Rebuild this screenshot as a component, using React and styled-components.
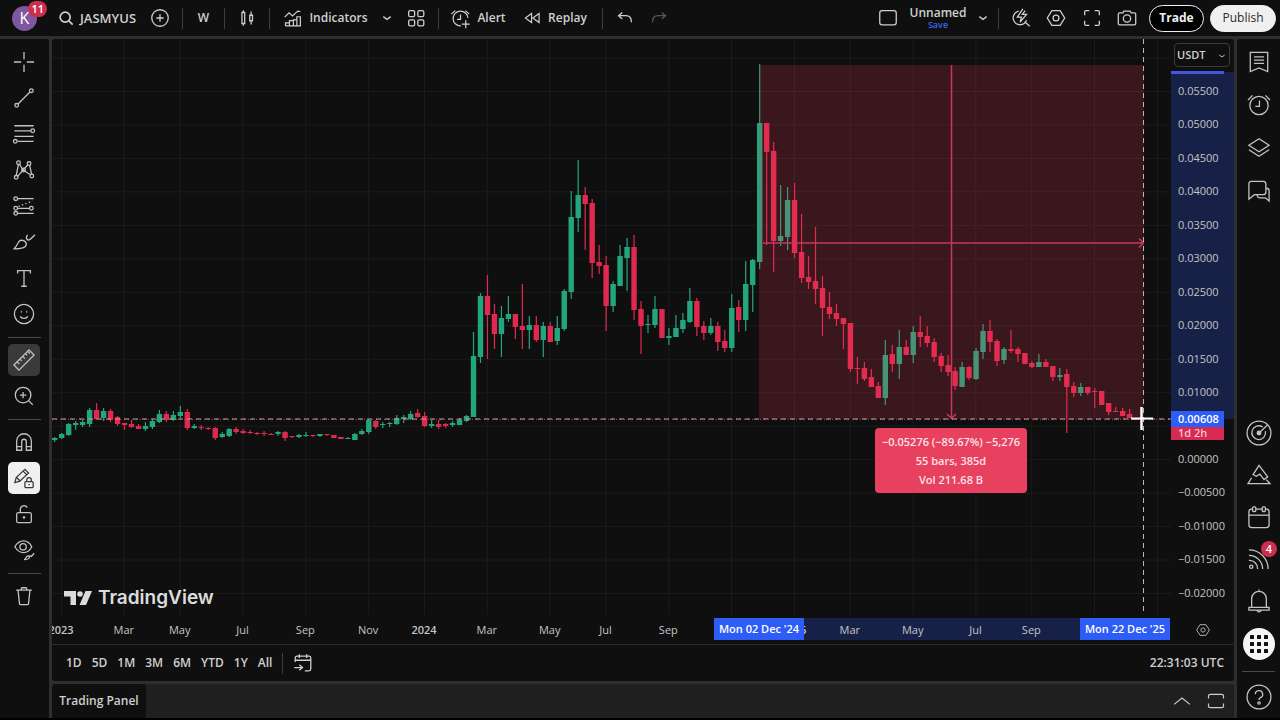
import React from 'react'
import styled, { createGlobalStyle } from 'styled-components'

const GlobalStyle = createGlobalStyle`
    * { box-sizing: border-box; }
    body {
        margin: 0;
        background: #000;
        color: #cfcfcf;
        font-family: 'Trebuchet MS', 'Open Sans', 'Noto Sans', sans-serif;
        font-size: 12px;
        line-height: 16px;
        overflow: hidden;
    }
    button, select {
        font: inherit;
        color: inherit;
        background: none;
        border: 0;
        padding: 0;
        margin: 0;
        cursor: pointer;
    }
`

const Shell = styled.div`
    height: 100vh;
    padding-bottom: 2px;
    display: flex;
    flex-direction: column;
`

const Frame = styled.div`
    flex: 1;
    min-height: 0;
    display: grid;
    grid-template-columns: 49px minmax(0, 1fr) 43px;
    grid-template-rows: 36px minmax(0, 1fr);
    gap: 3px;
    background: #2e2e2e;
`

const Header = styled.header`
    grid-column: 1 / -1;
    display: flex;
    align-items: center;
    background: #0f0f0f;
`

const Spacer = styled.div`
    flex: 1;
`

const AvatarButton = styled.button`
    position: relative;
    width: 49px;
    height: 36px;
    display: grid;
    place-items: center;
`

const Avatar = styled.span`
    width: 25px;
    height: 25px;
    border-radius: 50%;
    background: #7e57a0;
    color: #fff;
    display: grid;
    place-items: center;
    font-size: 16px;
`

const Badge = styled.span`
    position: absolute;
    top: ${({ $top }) => $top}px;
    right: ${({ $right }) => $right}px;
    min-width: 16px;
    height: 16px;
    padding: 0 3px;
    border-radius: 8px;
    background: #cc2f4e;
    color: #fff;
    font-size: 11px;
    font-weight: 600;
    text-align: center;
`

const ToolButton = styled.button`
    width: ${({ $width = 34 }) => $width}px;
    height: 32px;
    display: flex;
    align-items: center;
    justify-content: center;
    gap: ${({ $large }) => ($large ? 4 : 6)}px;
    font-size: ${({ $large }) => ($large ? 13 : 12)}px;
    font-weight: 600;
    white-space: nowrap;
    color: ${({ $dim }) => ($dim ? '#585858' : '#cfcfcf')};
`

const Divider = styled.span`
    width: 11px;
    height: 21px;
    display: flex;
    justify-content: center;
    &::before {
        content: '';
        width: 1px;
        background: #3d3d3d;
    }
`

const LayoutName = styled.button`
    width: 70px;
    display: flex;
    flex-direction: column;
    align-items: center;
    font-weight: 600;
    line-height: 14px;
`

const SaveHint = styled.span`
    font-size: 9px;
    font-weight: 600;
    line-height: 10px;
    color: #3d63f0;
`

const Pill = styled.button`
    width: ${({ $width }) => $width}px;
    height: 27px;
    border-radius: 14px;
    margin-left: ${({ $solid }) => ($solid ? 6 : 4)}px;
    border: 1px solid #f0f0f0;
    background: ${({ $solid }) => ($solid ? '#f0f0f0' : '#000')};
    color: ${({ $solid }) => ($solid ? '#2a2a2a' : '#f0f0f0')};
    font-weight: ${({ $solid }) => ($solid ? 500 : 700)};
    &:last-child { margin-right: 4px; }
`

const LeftBar = styled.nav`
    background: #0f0f0f;
    border-top-right-radius: 3px;
    padding: 5px 1px 0 0;
    display: flex;
    flex-direction: column;
    align-items: center;
`

const DrawButton = styled.button`
    width: 32px;
    height: 32px;
    margin: 2px 0;
    flex: none;
    border-radius: 5px;
    display: grid;
    place-items: center;
    background: ${({ $state }) => ({ active: '#3a3a3a', locked: '#f0f0f0' }[$state] || 'none')};
    color: ${({ $state }) => ($state === 'locked' ? '#3a3a3a' : '#c4c4c4')};
`

const Rule = styled.span`
    width: 33px;
    height: ${({ $height }) => $height}px;
    flex: none;
    display: flex;
    align-items: center;
    &::before {
        content: '';
        width: 100%;
        height: 1px;
        background: #484848;
    }
`

const RightBar = styled.nav`
    background: #0f0f0f;
    border-top-left-radius: 3px;
    padding: 1px 0 0;
    display: flex;
    flex-direction: column;
    align-items: center;
`

const SideButton = styled.button`
    position: relative;
    width: 43px;
    height: ${({ $height = 42 }) => $height}px;
    flex: none;
    display: grid;
    place-items: center;
    color: #c4c4c4;
`

const AppsDot = styled.span`
    width: 32px;
    height: 32px;
    border-radius: 50%;
    background: #f5f5f5;
    color: #111;
    display: grid;
    place-items: center;
`

const Center = styled.main`
    display: flex;
    flex-direction: column;
    gap: 3px;
    min-width: 0;
`

const Chart = styled.section`
    flex: 1;
    min-height: 0;
    display: flex;
    flex-direction: column;
    border-radius: 3px;
    background: #0f0f0f;
    overflow: hidden;
`

const ChartGrid = styled.div`
    flex: 1;
    min-height: 0;
    display: grid;
    grid-template-columns: minmax(0, 1fr) 63px;
    grid-template-rows: minmax(0, 1fr) 29px;
`

const Plot = styled.div`
    position: relative;
    min-height: 0;
    overflow: hidden;
`

const PlotSvg = styled.svg`
    display: block;
    width: 100%;
    height: 100%;
`

const Brand = styled.a`
    position: absolute;
    left: 12px;
    bottom: 5px;
    display: flex;
    align-items: center;
    gap: 5px;
    color: #dcdcdc;
    font-family: Inter, sans-serif;
    font-size: 19px;
    font-weight: 600;
    line-height: 24px;
    text-decoration: none;
`

const MeasureLabel = styled.div`
    position: absolute;
    left: 823px;
    top: 389px;
    width: 152px;
    padding: 4px 0;
    border-radius: 4px;
    background: #e8405f;
    color: #fbe3e8;
    font-size: 11px;
    font-weight: 600;
    line-height: 19px;
    text-align: center;
    white-space: nowrap;
`

const PriceAxis = styled.div`
    position: relative;
    padding: 4px 4px 0 3px;
    display: flex;
    flex-direction: column;
    font-size: 11px;
    font-weight: 500;
    line-height: 14px;
    background:
        linear-gradient(#4058e0, #4058e0) no-repeat 0 32px / 53px 3px,
        linear-gradient(#172148, #172148) no-repeat 0 33px / 100% 347px;
`

const Currency = styled.label`
    position: relative;
    height: 24px;
    flex: none;
    select {
        appearance: none;
        width: 100%;
        height: 24px;
        padding: 0 2px;
        border: 1px solid #3d3d3d;
        border-radius: 4px;
        background: #0f0f0f;
        font-weight: 600;
    }
    svg {
        position: absolute;
        right: 0;
        top: 5px;
        pointer-events: none;
    }
`

const PriceList = styled.div`
    flex: 1;
    padding: 17px 0 15px 4px;
    display: flex;
    flex-direction: column;
    justify-content: space-between;
    color: #c4c4c4;
    span { height: 14px; }
`

const PriceTag = styled.div`
    position: absolute;
    left: 0;
    top: 372px;
    width: 53px;
    background: #2d5cf6;
    color: #fff;
    padding-left: 7px;
    font-weight: 600;
    line-height: 16px;
`

const Countdown = styled.div`
    margin-left: -7px;
    padding-left: 7px;
    height: 13px;
    line-height: 12px;
    background: #d62a50;
    color: #f5c6d0;
`

const TimeAxis = styled.div`
    position: relative;
    padding-left: 9px;
    display: flex;
    overflow: hidden;
    color: #c4c4c4;
    font-size: 11px;
    line-height: 30px;
`

const Tick = styled.span`
    flex: ${({ $weeks }) => $weeks} 1 0;
    font-weight: ${({ $year }) => ($year ? 600 : 500)};
    span {
        position: relative;
        display: flex;
        justify-content: center;
        width: 0;
    }
`

const RangeBand = styled.div`
    position: absolute;
    left: 707px;
    right: 27px;
    top: 3px;
    height: 22px;
    background: #172148;
`

const DateTag = styled.div`
    position: absolute;
    left: ${({ $left }) => $left}px;
    top: 3px;
    width: 90px;
    background: #2d5cf6;
    color: #fff;
    font-weight: 600;
    line-height: 22px;
    text-align: center;
    white-space: nowrap;
`

const AxisCorner = styled.button`
    display: grid;
    place-items: center;
    color: #b8b8b8;
`

const RangeBar = styled.div`
    height: 37px;
    flex: none;
    border-top: 1px solid #2a2a2a;
    padding: 0 10px 0 9px;
    display: flex;
    align-items: center;
    font-weight: 600;
`

const RangeButton = styled.button`
    padding: 0 5px;
    line-height: 24px;
`

const Panel = styled.footer`
    height: 34px;
    flex: none;
    display: flex;
    align-items: center;
    background: #1f1f1f;
    border-radius: 3px 3px 0 0;
    overflow: hidden;
    padding-right: 1px;
`

const PanelTab = styled.button`
    width: 94px;
    height: 34px;
    background: #0f0f0f;
    border-radius: 3px 3px 0 0;
    font-weight: 600;
`

// ---- icons, drawn on a 24 unit grid ----

const shapes = {
    search: <><circle cx="11" cy="11" r="6" strokeWidth="2" /><path d="M15.500 15.500l4.500 4.500" strokeWidth="2" /></>,
    plusCircle: <><circle cx="12" cy="12" r="9" /><path d="M12 8v8M8 12h8" /></>,
    candles: <path d="M6.500 6h3v12h-3zM8 3.500V6M8 18v2.500M15 9h3v6h-3zM16.500 5v4M16.500 15v4" />,
    indicators: (
        <path d="M4 20.500h17V10h-4v10.500M17 13.500h-4v7M13 14.500H8.500v6M8.500 17H4v3.500M3 10.500l5-5 4 3.500L18 3.500l3 .5" />
    ),
    down: <path d="M8 10.500l4 3 4-3" />,
    grid: (
        <>
            <rect x="4" y="4" width="6.500" height="6.500" rx="1.500" />
            <rect x="14" y="4" width="6.500" height="6.500" rx="1.500" />
            <rect x="4" y="14" width="6.500" height="6.500" rx="1.500" />
            <rect x="14" y="14" width="6.500" height="6.500" rx="1.500" />
        </>
    ),
    alert: <path d="M20.500 11.500A8.500 8.500 0 1 0 12.500 20.500M12 7.500v5.500H8M1.500 7L6 3M17.500 3L22 7M18 14v9M13.500 18.500h9" />,
    replay: <path d="M11.500 6.500v11L4 12zM20.500 6.500v11L13 12z" />,
    undo: <path d="M9 6L5 9.500 9 13M5 9.500H13q6 0 6 7" />,
    redo: <path d="M15 6l4 3.500-4 3.500M19 9.500H11q-6 0-6 7" />,
    box: <rect x="3" y="4" width="18" height="15.500" rx="2.500" />,
    flash: (
        <>
            <path d="M9.500 4.500A7.500 7.500 0 1 0 18 14.500M16 16l5.500 5" />
            <path d="M14 2L8 11h4.500L11 16.500 18 8h-4.500l3-4" />
        </>
    ),
    hex: <><path d="M7.500 4h9L21.500 12l-5 8h-9L2.500 12z" /><circle cx="12" cy="12" r="3.200" /></>,
    full: <path d="M4 9V5.500A1.500 1.500 0 0 1 5.500 4H9M15 4h3.500A1.500 1.500 0 0 1 20 5.500V9M20 15v3.500a1.500 1.500 0 0 1-1.500 1.500H15M9 20H5.500A1.500 1.500 0 0 1 4 18.500V15" />,
    camera: (
        <>
            <path d="M4 6.500h3.500l1-2h7l1 2H20a1.500 1.500 0 0 1 1.500 1.500v10a1.500 1.500 0 0 1-1.500 1.500H4A1.500 1.500 0 0 1 2.500 18V8A1.500 1.500 0 0 1 4 6.500z" />
            <circle cx="12" cy="12.500" r="4" />
        </>
    ),
    cross: <path d="M12 1v8M12 15v8M1 12h8M15 12h8" />,
    line: <><circle cx="4" cy="20" r="2" /><circle cx="20" cy="4" r="2" /><path d="M5.500 18.500l13-13" /></>,
    levels: (
        <>
            <path d="M1.500 3h21M1.500 8.500h18M1.500 14.500h21M5 20h17.500" />
            <circle cx="21.500" cy="8.500" r="2" /><circle cx="2.500" cy="20" r="2" />
        </>
    ),
    pattern: (
        <>
            <path d="M3.500 18L6 5.500M7 5.500l4 6.500 5.500-6M18 6.500l2.500 10.500M5 19l6-7 8.500 5.500" />
            <circle cx="6" cy="4" r="2" /><circle cx="17.500" cy="5" r="2" />
            <circle cx="11.500" cy="12" r="2" /><circle cx="3.500" cy="20" r="2" /><circle cx="20.500" cy="18.500" r="2" />
        </>
    ),
    forecast: (
        <>
            <path d="M5 4h17.500M5 14.500h13M5 20h17.500" />
            <path d="M6 12.500L21 6.500" strokeDasharray="1.500 2.500" />
            <circle cx="3" cy="4" r="2" /><circle cx="3" cy="14.500" r="2" />
            <circle cx="20" cy="14.500" r="2" /><circle cx="3" cy="20" r="2" />
        </>
    ),
    brush: (
        <path d="M.500 19.500c3-.5 3.500-5 6-8 3-3 8-.5 8 3 0 4-5 5-14 5zM16 4.500c-2 1.500-2 4 .5 5.500 2.500.5 4-3 7.500-6" />
    ),
    text: <path d="M5 7V4h14v3M12 4v17M9 21h6" />,
    smile: (
        <>
            <circle cx="12" cy="12" r="10.500" />
            <path d="M8 14.500c1 3 7 3 8 0" />
            <path d="M8.500 9.500h1M14.500 9.500h1" strokeWidth="2" />
        </>
    ),
    ruler: (
        <path d="M1 17.500L17.500 1l5.500 5.500L6.500 23zM4.500 14l2.500 2.500M7.500 11l2 2M10.500 8l2.500 2.500M13.500 5l2 2M16 2.500l2.500 2.500" />
    ),
    zoomIn: <><circle cx="11" cy="11" r="8.500" /><path d="M17 17l4.500 4.500M11 7.500v7M7.500 11h7" /></>,
    magnet: (
        <path d="M4 21V11a8 8 0 0 1 16 0v10h-5.500V11.500a2.500 2.500 0 0 0-5 0V21zM4 17h5.500M14.500 17H20" />
    ),
    pencilLock: (
        <>
            <path d="M2 17l1.500-5.500L13 2.500l4 4L7.500 15.500zM11 4.500l4 4M4 11.500l3.500 3.500" />
            <rect x="13" y="16" width="9" height="6.500" rx="1" />
            <path d="M15 16v-2a2.500 2.500 0 0 1 5 0v2M17.500 18.500v1.500" />
        </>
    ),
    unlock: (
        <>
            <rect x="4" y="10.500" width="16" height="11" rx="2" />
            <path d="M8 10.500V7a4 4 0 0 1 7.500-2" />
            <path d="M12 14.500v2.500" strokeWidth="2.500" />
        </>
    ),
    eye: (
        <>
            <path d="M2 8.500c5-8.500 14-8.500 18.500 0-4.500 8.500-13.500 8.500-18.500 0z" />
            <circle cx="11" cy="8.500" r="3.500" />
            <path d="M12 22.500c2 0 2-4 4.500-4s2.500 4-4.500 4zM18 18l2 1 3-3.500" />
        </>
    ),
    trash: <path d="M3.500 5.500h17M9 5.500V4q0-1 1-1h4q1 0 1 1v1.500M5.500 5.500L7 20q.2 1.500 1.500 1.500h7q1.300 0 1.500-1.500l1.500-14.500" />,
    watchlist: <path d="M2.500 1.500h19v21L12 18.500l-9.500 4zM6.500 6.500h11M6.500 10h11M6.500 13.500h11" />,
    clock: <><circle cx="12" cy="12.500" r="10" /><path d="M12.500 7v6.500H8M0 6.500L5 1.500M19 1.500L24 6.500" /></>,
    layers: <path d="M12 2L1 9l11 7 11-7zM1 14l11 7 11-7" />,
    chat: (
        <path d="M3.500 1.500h13a3 3 0 0 1 3 3V13a3 3 0 0 1-3 3H7L1 21V4a2.500 2.500 0 0 1 2.500-2.500zM19.500 9h.5a3 3 0 0 1 3 3v11l-4-3.500h-6a3 3 0 0 1-3-3.500" />
    ),
    target: (
        <>
            <circle cx="12" cy="12" r="13" />
            <path d="M16 5.500A7.500 7.500 0 1 0 19 10M12 12l9-8.500" />
            <circle cx="12" cy="12" r="2" fill="currentColor" />
        </>
    ),
    peaks: <path d="M5.500 11.500L12 1.500l9.500 12.500-4 3-4.500-6-4 2.500zM4 15L0 21.500h24L20 17" />,
    calendar: (
        <>
            <rect x="1" y="3.500" width="22" height="20" rx="3" />
            <path d="M1 10h22" />
            <rect x="5" y="1" width="3.500" height="5" rx="1" fill="#0f0f0f" />
            <rect x="15.500" y="1" width="3.500" height="5" rx="1" fill="#0f0f0f" />
        </>
    ),
    feed: <><circle cx="3.500" cy="20.500" r="1.800" /><path d="M1 13.500a9 9 0 0 1 9.500 9.500M1 8a15 15 0 0 1 15 15M1 2a21 21 0 0 1 21 21" /></>,
    bell: <path d="M12 1V-.500M4 19V9.500a8 8 0 0 1 16 0V19M1 19h22v3H1zM9.500 22q2.500 4 5 0" />,
    help: <><circle cx="12" cy="12" r="13" /><path d="M8 9a4 4 0 1 1 5.500 3.700q-1.500 1-1.500 2.500" /><circle cx="12" cy="18.500" r="1.300" /></>,
    goto: <path d="M3.500 11V6.500a2 2 0 0 1 2-2h13a2 2 0 0 1 2 2v12a2 2 0 0 1-2 2H14M3.500 9h17M8 2.500v4M16 2.500v4M2.500 17h8.500M8 14l3.500 3L8 20" />,
    up: <path d="M2.500 16L12 8.500l9.500 7.500" />,
    maximize: <path d="M3 9V6a2 2 0 0 1 2-2h14a2 2 0 0 1 2 2v3M3 15v3a2 2 0 0 0 2 2h14a2 2 0 0 0 2-2v-3" />
}

const Icon = ({ name, size = 22 }) => (
    <svg
        width={size}
        height={size}
        viewBox="0 0 24 24"
        fill="none"
        stroke="currentColor"
        strokeWidth="1.400"
        overflow="visible"
        aria-hidden="true"
    >
        {shapes[name]}
    </svg>
)

const AppsGrid = () => (
    <svg width="18" height="18" viewBox="0 0 18 18" fill="currentColor" aria-hidden="true">
        {[0, 7, 14].map((x) => [0, 7, 14].map((y) => (
            <rect key={`${x}-${y}`} x={x} y={y} width="4" height="4" rx="0.500" />
        )))}
    </svg>
)

const BrandMark = () => (
    <svg width="29" height="16" viewBox="0 0 29 16" fill="currentColor" aria-hidden="true">
        <path d="M0 1h12v14H6.500V6.500H0z" />
        <circle cx="16" cy="4" r="2.800" />
        <path d="M21.500 1H28l-6 14h-6.500z" />
    </svg>
)

// ---- chart data ----

// weekly bars: direction, high, body top, body bottom, low (plot units)
const bars = [
    'g 437 438 440 442', 'g 433 434 438 439', 'g 423 424 435 436', 'g 421 423 425 430', 'g 420 422 425 427',
    'g 408 410 424 427', 'r 403 410 419 420', 'g 408 411 418 421', 'r 409 411 420 422', 'r 416 417 424 426',
    'r 423 423 425 430', 'r 420 424 427 428', 'r 424 426 429 429', 'g 422 426 429 431', 'g 420 421 427 429',
    'g 410 414 422 423', 'r 411 414 420 422', 'g 411 415 420 421', 'g 406 412 416 418', 'r 409 412 428 430',
    'g 424 426 428 429', 'r 425 427 428 430', 'r 427 428 429 430', 'r 427 428 438 440', 'g 432 434 437 438',
    'g 428 429 436 437', 'r 427 429 432 434', 'r 429 431 433 434', 'r 430 432 433 434', 'r 432 433 434 435',
    'r 431 433 434 436', 'r 433 434 435 435', 'g 431 432 434 436', 'r 431 432 438 441', 'r 436 436 437 438',
    'g 434 435 437 438', 'g 432 435 436 437', 'r 435 435 436 437', 'g 434 434 436 437', 'r 434 434 435 436',
    'r 435 435 438 438', 'r 437 437 439 439', 'g 437 438 439 439', 'g 433 434 440 440', 'g 429 431 434 435',
    'g 419 420 432 434', 'r 420 421 427 429', 'g 422 424 425 428', 'g 422 423 424 427', 'g 415 418 424 425',
    'g 415 417 419 423', 'g 411 414 419 420', 'r 409 413 417 418', 'r 412 416 426 427', 'g 420 424 426 428',
    'r 420 424 427 429', 'r 423 424 426 428', 'g 421 423 425 427', 'g 418 420 425 425', 'g 415 416 421 422',
    'g 332 356 417 417', 'g 293 296 357 363', 'r 275 296 315 359', 'r 304 314 334 349', 'g 306 318 334 357',
    'g 296 314 319 322', 'r 314 314 327 339', 'r 284 326 330 349', 'g 316 325 330 349', 'r 316 325 340 342',
    'g 322 326 340 357', 'r 322 326 342 342', 'g 316 328 341 345', 'g 289 291 329 331', 'g 191 217 292 299',
    'g 160 195 218 232', 'r 187 195 204 250', 'r 199 203 263 278', 'r 245 262 266 274', 'r 256 265 306 331',
    'g 281 284 306 312', 'g 245 256 286 286', 'g 238 247 258 291', 'r 235 247 310 320', 'r 301 309 326 354',
    'g 315 324 325 333', 'g 296 309 325 328', 'r 309 309 338 338', 'g 328 336 338 345', 'g 315 328 337 337',
    'g 313 320 329 333', 'g 288 301 322 323', 'r 298 301 327 336', 'r 321 326 333 340', 'g 318 326 333 335',
    'r 322 326 342 351', 'r 330 341 348 352', 'g 294 308 348 352', 'r 300 307 320 332', 'g 261 284 320 331',
    'g 259 260 285 312', 'g 64 123 262 269', 'r 123 123 152 245', 'r 142 151 241 272', 'g 185 236 241 246',
    'g 187 200 237 250', 'r 183 200 253 258', 'r 214 252 278 283', 'r 256 277 282 289', 'r 227 281 289 304',
    'r 276 288 308 336', 'r 292 307 314 319', 'r 304 313 319 326', 'r 318 318 324 349', 'r 323 323 369 372',
    'r 357 368 369 384', 'r 362 368 379 381', 'r 369 377 387 387', 'r 382 386 398 398', 'g 340 355 398 405',
    'r 345 354 364 372', 'g 330 347 364 379', 'r 340 347 355 355', 'g 326 332 355 363', 'r 316 332 337 347',
    'r 326 336 343 347', 'r 338 342 357 362', 'r 353 356 366 372', 'r 355 365 372 376', 'r 367 371 386 390',
    'g 362 367 387 387', 'r 366 367 378 380', 'g 348 351 379 380', 'g 324 331 352 359', 'r 320 331 342 352',
    'r 339 341 361 366', 'g 347 349 360 364', 'r 330 349 351 353', 'r 347 349 354 362', 'r 353 353 364 364',
    'r 361 363 367 368', 'g 354 362 367 367', 'r 359 362 367 367', 'r 366 366 377 381', 'g 368 375 377 381',
    'r 369 374 387 433', 'r 382 386 393 397', 'g 383 387 393 396', 'r 387 387 393 395', 'r 388 391 392 408',
    'r 391 391 405 405', 'r 403 403 412 415', 'r 407 411 412 412', 'r 408 411 416 416', 'r 409 414 418 418',
    'r 418 418 420 420'
].map((row) => {
    const [side, ...levels] = row.split(' ')
    return [side, ...levels.map(Number)]
})

const WEEK = 6.98
const FIRST_BAR = 54.7

// label, weeks until the next tick, year marker; ticks under a date tag carry no label
const ticks = [
    ['2023', 9, true], ['Mar', 8], ['May', 9], ['Jul', 9], ['Sep', 9], ['Nov', 8],
    ['2024', 9, true], ['Mar', 9], ['May', 8], ['Jul', 9], ['Sep', 9], ['', 9],
    ['2025', 8, true], ['Mar', 9], ['May', 9], ['Jul', 8], ['Sep', 9], ['', 9],
    ['', 2]
]

const TAGGED_ROW = 10

const prices = Array.from({ length: 16 }, (_, i) => (
    i === TAGGED_ROW ? '' : (0.055 - i * 0.005).toFixed(5).replace('-', '−')
))

const tickPositions = ticks.map((_, i) => (
    61.5 + WEEK * ticks.slice(0, i).reduce((sum, tick) => sum + tick[1], 0)
))

const PricePlot = () => (
    <PlotSvg viewBox="52 39 1119 576" preserveAspectRatio="xMinYMin slice" role="img" aria-label="Weekly price chart">
        <g stroke="#1c1c1c">
            {tickPositions.map((x) => <line key={x} x1={x} x2={x} y1="39" y2="615" />)}
            {Array.from({ length: 17 }, (_, i) => 58 + i * 33.47).map((y) => (
                <line key={y} x1="52" x2="1171" y1={y} y2={y} />
            ))}
        </g>
        {bars.map(([side, high, top, bottom, low], i) => {
            const x = FIRST_BAR + i * WEEK
            const color = side === 'g' ? '#22a67e' : '#e0294f'
            return (
                <g key={i} fill={color}>
                    <rect x={x - 0.6} y={high} width="1.200" height={low - high} />
                    <rect x={x - 2.7} y={top} width="5.400" height={Math.max(bottom - top, 1)} />
                </g>
            )
        })}
        <rect x="759" y="65" width="385" height="354" fill="rgba(247, 60, 90, 0.18)" />
        <g stroke="#c8385a" strokeWidth="1.500" fill="none">
            <path d="M951.500 65v353M947 414l4.500 4.500 4.500-4.500" />
            <path d="M763 243h380M1139 238.500l4.500 4.500-4.500 4.500" />
        </g>
        <path d="M52 419.500h1119" stroke="#e0294f" strokeDasharray="1 3" />
        <path d="M52 419h1119" stroke="#b8a8aa" strokeWidth="1.200" strokeDasharray="5 4" />
        <path d="M1143.500 39v576" stroke="#b8b8b8" strokeDasharray="5 4" />
        <path d="M1131 418.500h22" stroke="#fff" strokeWidth="2" />
        <path d="M1141.500 407v23" stroke="#fff" strokeWidth="2.500" />
    </PlotSvg>
)

const drawTools = [
    ['Cross', 'cross'], ['Trend line', 'line'], ['Fib retracement', 'levels'], ['Patterns', 'pattern'],
    ['Forecast', 'forecast'], ['Brush', 'brush'], ['Text', 'text'], ['Emoji', 'smile'], null,
    ['Measure', 'ruler', 'active'], ['Zoom in', 'zoomIn'], null,
    ['Magnet', 'magnet'], ['Lock drawing mode', 'pencilLock', 'locked'], ['Lock all', 'unlock'], ['Hide', 'eye'], null,
    ['Remove', 'trash']
]

const ranges = ['1D', '5D', '1M', '3M', '6M', 'YTD', '1Y', 'All']

const TopBar = () => (
    <Header>
        <AvatarButton aria-label="Account">
            <Avatar>K</Avatar>
            <Badge $top={1} $right={2}>11</Badge>
        </AvatarButton>
        <ToolButton $width={94} $large><Icon name="search" size={20} />JASMYUS</ToolButton>
        <ToolButton aria-label="Compare"><Icon name="plusCircle" /></ToolButton>
        <Divider />
        <ToolButton $width={31}>W</ToolButton>
        <Divider />
        <ToolButton aria-label="Candles"><Icon name="candles" /></ToolButton>
        <Divider />
        <ToolButton $width={100}><Icon name="indicators" size={21} />Indicators</ToolButton>
        <ToolButton $width={24} aria-label="Favorites"><Icon name="down" /></ToolButton>
        <ToolButton aria-label="Templates"><Icon name="grid" /></ToolButton>
        <Divider />
        <ToolButton $width={68}><Icon name="alert" size={21} />Alert</ToolButton>
        <ToolButton $width={85}><Icon name="replay" size={20} />Replay</ToolButton>
        <Divider />
        <ToolButton aria-label="Undo"><Icon name="undo" /></ToolButton>
        <ToolButton $dim aria-label="Redo"><Icon name="redo" /></ToolButton>
        <Spacer />
        <ToolButton $width={30} aria-label="Layout"><Icon name="box" /></ToolButton>
        <LayoutName>Unnamed<SaveHint>Save</SaveHint></LayoutName>
        <ToolButton $width={20} aria-label="Layouts"><Icon name="down" /></ToolButton>
        <Divider />
        <ToolButton aria-label="Quick search"><Icon name="flash" /></ToolButton>
        <ToolButton $width={36} aria-label="Settings"><Icon name="hex" /></ToolButton>
        <ToolButton $width={35} aria-label="Fullscreen"><Icon name="full" /></ToolButton>
        <ToolButton $width={36} aria-label="Snapshot"><Icon name="camera" /></ToolButton>
        <Pill $width={55}>Trade</Pill>
        <Pill $width={66} $solid>Publish</Pill>
    </Header>
)

const DrawingBar = () => (
    <LeftBar>
        {drawTools.map((tool, i) => (
            tool
                ? <DrawButton key={tool[0]} aria-label={tool[0]} $state={tool[2]}><Icon name={tool[1]} /></DrawButton>
                : <Rule key={i} $height={10} />
        ))}
    </LeftBar>
)

const WidgetBar = () => (
    <RightBar>
        {['watchlist', 'clock', 'layers', 'chat'].map((name) => (
            <SideButton key={name} $height={43} aria-label={name}><Icon name={name} /></SideButton>
        ))}
        <Spacer />
        {['target', 'peaks', 'calendar', 'feed', 'bell'].map((name) => (
            <SideButton key={name} aria-label={name}>
                <Icon name={name} />
                {name === 'feed' ? <Badge $top={3} $right={3}>4</Badge> : null}
            </SideButton>
        ))}
        <SideButton $height={44} aria-label="Apps"><AppsDot><AppsGrid /></AppsDot></SideButton>
        <Rule $height={10} />
        <SideButton aria-label="Help"><Icon name="help" /></SideButton>
    </RightBar>
)

const App = () => (
    <Shell>
        <GlobalStyle />
        <Frame>
            <TopBar />
            <DrawingBar />
            <Center>
                <Chart>
                    <ChartGrid>
                        <Plot>
                            <PricePlot />
                            <MeasureLabel>
                                −0.05276 (−89.67%) −5,276<br />
                                55 bars, 385d<br />
                                Vol 211.68 B
                            </MeasureLabel>
                            <Brand href="#"><BrandMark />TradingView</Brand>
                        </Plot>
                        <PriceAxis>
                            <Currency>
                                <select aria-label="Currency" defaultValue="USDT"><option>USDT</option></select>
                                <Icon name="down" size={16} />
                            </Currency>
                            <PriceList>
                                {prices.map((price, i) => <span key={i}>{price}</span>)}
                            </PriceList>
                            <PriceTag>0.00608<Countdown>1d 2h</Countdown></PriceTag>
                        </PriceAxis>
                        <TimeAxis>
                            <RangeBand />
                            {ticks.map(([label, weeks, year], i) => (
                                <Tick key={i} $weeks={weeks} $year={year}><span>{label}</span></Tick>
                            ))}
                            <DateTag $left={662}>Mon 02 Dec '24</DateTag>
                            <DateTag $left={1028}>Mon 22 Dec '25</DateTag>
                        </TimeAxis>
                        <AxisCorner aria-label="Axis settings"><Icon name="hex" size={16} /></AxisCorner>
                    </ChartGrid>
                    <RangeBar>
                        {ranges.map((range) => <RangeButton key={range}>{range}</RangeButton>)}
                        <Divider />
                        <ToolButton $width={30} aria-label="Go to date"><Icon name="goto" /></ToolButton>
                        <Spacer />
                        <button>22:31:03 UTC</button>
                    </RangeBar>
                </Chart>
                <Panel>
                    <PanelTab>Trading Panel</PanelTab>
                    <Spacer />
                    <ToolButton aria-label="Open panel"><Icon name="up" size={20} /></ToolButton>
                    <ToolButton aria-label="Maximize panel"><Icon name="maximize" size={20} /></ToolButton>
                </Panel>
            </Center>
            <WidgetBar />
        </Frame>
    </Shell>
)

export default App
